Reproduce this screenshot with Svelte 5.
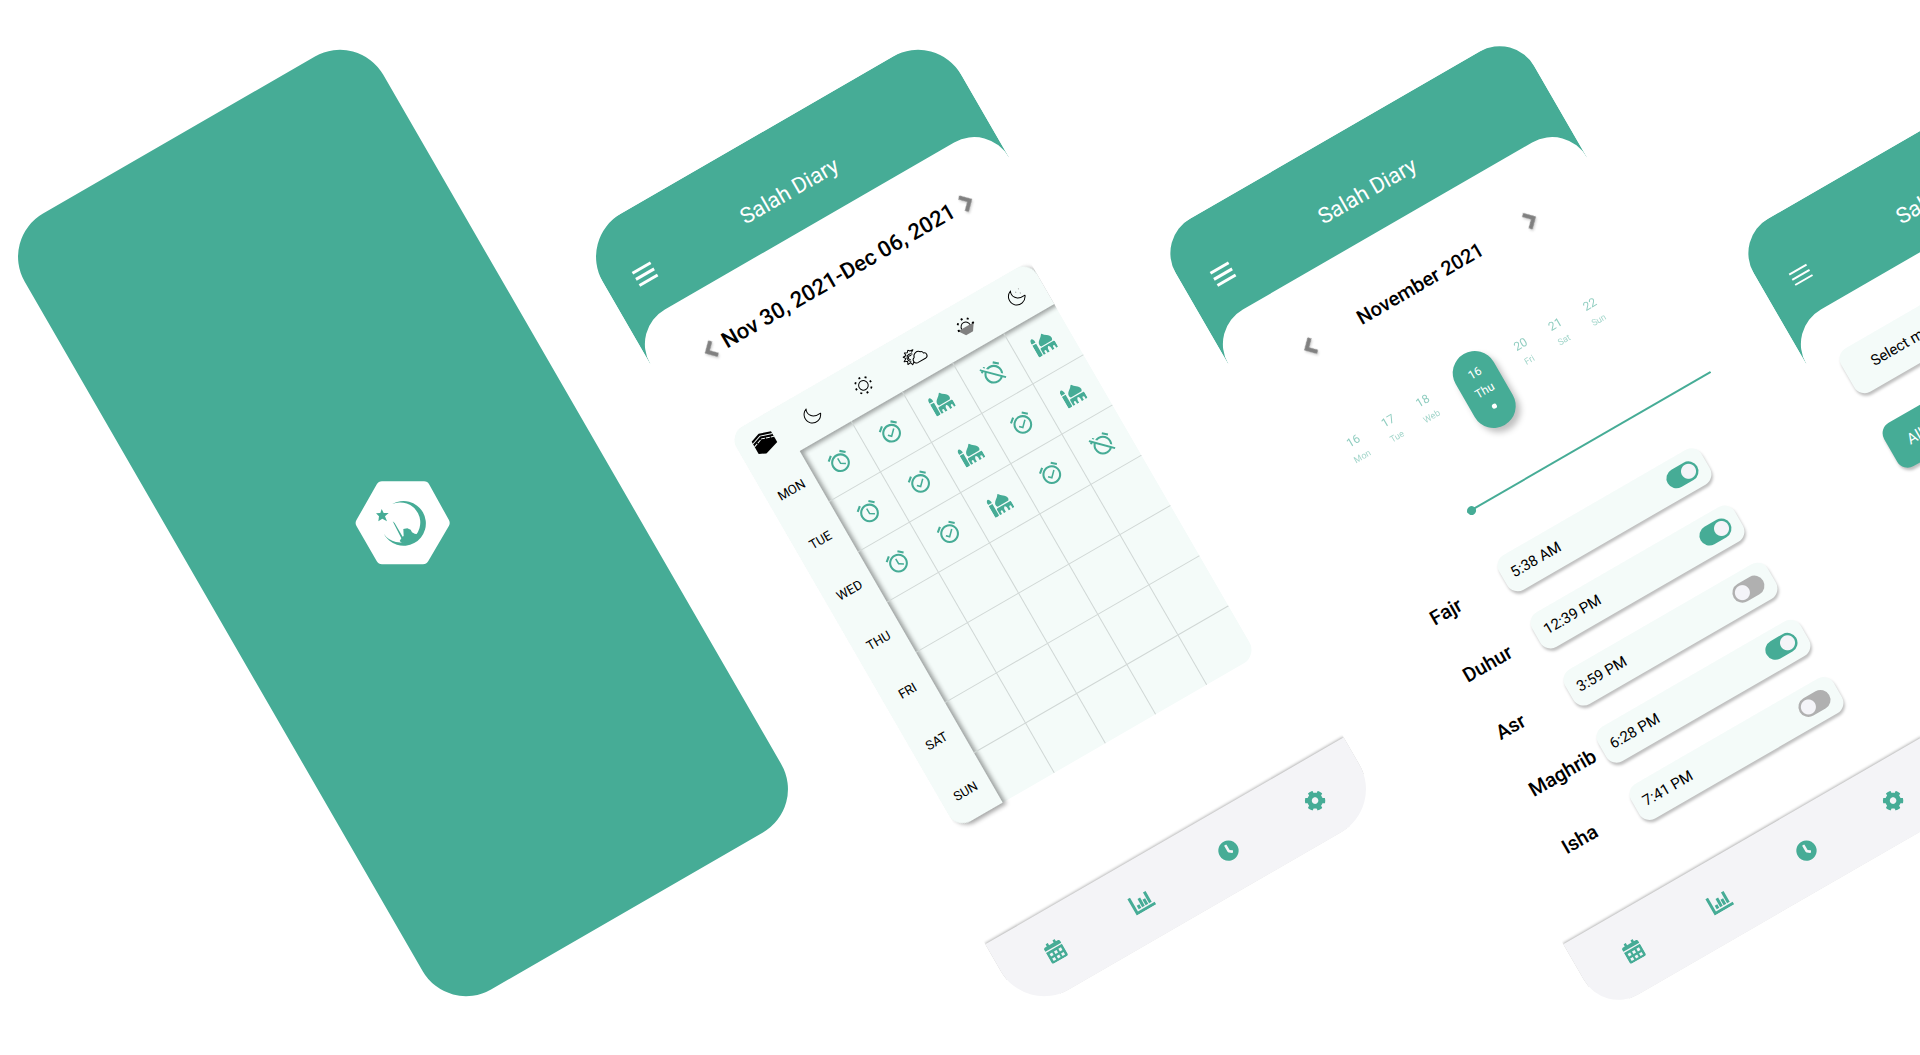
<script>
  const prayers = ['Tahajjud', 'Fajr', 'Dhuhr', 'Asr', 'Maghrib', 'Isha'];

  const week = [
    { day: 'MON', marks: ['alarm', 'done', 'mosque', 'off', 'mosque'] },
    { day: 'TUE', marks: ['alarm', 'done', 'mosque', 'done', 'mosque'] },
    { day: 'WED', marks: ['alarm', 'done', 'mosque', 'done', 'off'] },
    { day: 'THU', marks: ['', '', '', '', ''] },
    { day: 'FRI', marks: ['', '', '', '', ''] },
    { day: 'SAT', marks: ['', '', '', '', ''] },
    { day: 'SUN', marks: ['', '', '', '', ''] }
  ];

  const days = [
    { num: 16, name: 'Mon' },
    { num: 17, name: 'Tue' },
    { num: 18, name: 'Web' },
    { num: 16, name: 'Thu', active: true },
    { num: 20, name: 'Fri' },
    { num: 21, name: 'Sat' },
    { num: 22, name: 'Sun' }
  ];

  let times = $state([
    { name: 'Fajr', time: '5:38 AM', on: true },
    { name: 'Duhur', time: '12:39 PM', on: true },
    { name: 'Asr', time: '3:59 PM', on: false },
    { name: 'Maghrib', time: '6:28 PM', on: true },
    { name: 'Isha', time: '7:41 PM', on: false }
  ]);

  let progress = $state(0);
</script>

{#snippet mark(kind)}
  {#if kind === 'mosque'}
    <svg class="mosque" viewBox="0 0 640 512" preserveAspectRatio="none" aria-label="Prayed in mosque">
      <path d="M0 480c0 17.67 14.33 32 32 32h64c17.67 0 32-14.33 32-32V160H0v320zm579.16-192c17.86-17.39 28.84-37.34 28.84-58.91 0-52.86-41.79-93.79-87.92-122.9-41.94-26.47-80.63-57.77-111.96-96.22L400 0l-8.12 9.97c-31.33 38.45-70.01 69.76-111.96 96.22C233.79 135.3 192 176.23 192 229.09c0 21.57 10.98 41.52 28.84 58.91h358.32zM608 320H192c-17.67 0-32 14.33-32 32v128c0 17.67 14.33 32 32 32h32v-64c0-17.67 14.33-32 32-32s32 14.33 32 32v64h64v-72c0-48 48-72 48-72s48 24 48 72v72h64v-64c0-17.67 14.33-32 32-32s32 14.33 32 32v64h32c17.67 0 32-14.33 32-32V352c0-17.67-14.33-32-32-32zM64 0S0 32 0 96v32h128V96c0-64-64-96-64-96z" />
    </svg>
  {:else if kind === 'off'}
    <svg class="clock" viewBox="0 0 24 24" aria-label="Missed">
      <path d="M12 6c3.87 0 7 3.13 7 7 0 .84-.16 1.65-.43 2.4l1.52 1.52c.58-1.19.91-2.51.91-3.92 0-4.97-4.03-9-9-9-1.41 0-2.73.33-3.92.91L9.6 6.43C10.35 6.16 11.16 6 12 6zm10-.28l-4.6-3.86-1.29 1.53 4.6 3.86L22 5.72zM2.92 2.29L1.65 3.57 2.98 4.9l-1.11.93 1.42 1.42 1.11-.94.8.8C3.83 8.69 3 10.75 3 13c0 4.97 4.02 9 9 9 2.25 0 4.31-.83 5.89-2.2l2.2 2.2 1.27-1.27L3.89 3.27l-.97-.98zm13.55 16.1C15.26 19.39 13.7 20 12 20c-3.87 0-7-3.13-7-7 0-1.7.61-3.26 1.61-4.47l9.86 9.86zM8.02 3.28L6.6 1.86l-.86.71 1.42 1.42.86-.71z" />
    </svg>
  {:else if kind}
    <svg class="clock" viewBox="0 0 24 24" aria-label={kind === 'done' ? 'On time' : 'Reminder'}>
      <path d="M22 5.72l-4.6-3.86-1.29 1.53 4.6 3.86L22 5.72zM7.88 3.39L6.6 1.86 2 5.71l1.29 1.53 4.59-3.85zM12 4c-4.97 0-9 4.03-9 9s4.02 9 9 9c4.97 0 9-4.03 9-9s-4.03-9-9-9zm0 16c-3.87 0-7-3.13-7-7s3.13-7 7-7 7 3.13 7 7-3.13 7-7 7z" />
      {#if kind === 'done'}
        <path d="M10.54 14.53L8.41 12.4l-1.06 1.06 3.18 3.18 6-6-1.06-1.06-4.93 4.95z" />
      {:else}
        <path d="M12.5 8H11v6l4.75 2.85.75-1.23-4-2.37V8z" />
      {/if}
    </svg>
  {/if}
{/snippet}

{#snippet prayerIcon(index)}
  {#if index === 0}
    <svg class="kaaba" viewBox="0 0 24 22">
      <path d="M1 4L11 .5 23 4.500V17L8 21.500 1 18z" />
      <path class="band" d="M1 6.600L11 3.200 23 7.200" />
      <path class="band dashed" d="M1 9.800L11 6.400 23 10.400" />
    </svg>
  {:else if index === 1}
    <svg class="line" viewBox="0 0 20 20">
      <path d="M7.500 1.800C5 6.500 8 13.800 18 12.700 15.500 18.600 8.500 19.800 4.300 15.800 0 11.500 1.500 4.300 7.500 1.800z" />
    </svg>
  {:else if index === 2}
    <svg class="line" viewBox="0 0 20 20">
      <circle cx="10" cy="10" r="4.800" />
      <path class="ray" d="M10 1v1.800M10 17.200V19M1 10h1.800M17.200 10H19M3.600 3.600l1.200 1.200M15.200 15.200l1.200 1.200M3.600 16.400l1.200-1.200M15.200 4.800l1.200-1.200" />
    </svg>
  {:else if index === 3}
    <svg class="line wide" viewBox="0 0 26 18">
      <path d="M12 4.500l2.600-1.600-3.200-.4L10 .8 8.300 2.700 5.600 1.400l.2 3L2.500 4.600l1.700 2.500L1 9l3.200 1.300-1.200 3 3.200-.5.8 3 2.400-1.800" />
      <path d="M12 6.500A3.700 3.700 0 1 0 7.600 12M10.200 7.300a2 2 0 1 0-2.400 3" />
      <path d="M12.500 16.500a3.200 3.200 0 0 1-.6-6.300A4.600 4.600 0 0 1 20 8.300a3 3 0 0 1 2.200 2.700 2.800 2.800 0 0 1-.4 5.500z" />
    </svg>
  {:else if index === 4}
    <svg class="line" viewBox="0 0 20 20">
      <path class="dusk" d="M1 10.500h18l-5 7.500H6z" />
      <path d="M5.200 10.500a4.800 4.800 0 0 1 9.600 0" />
      <path class="ray" d="M10 1v2M3.700 3.700l1.300 1.300M16.300 3.700L15 5M.8 10.500h2M17.200 10.500h2" />
    </svg>
  {:else}
    <svg class="line" viewBox="0 0 20 20">
      <path d="M7.500 1.800C5 6.500 8 13.800 18 12.700 15.500 18.600 8.500 19.800 4.300 15.800 0 11.500 1.500 4.300 7.500 1.800z" />
      <path class="stars" d="M11 5.500h1M15 4h1M14.500 8.500h1" />
    </svg>
  {/if}
{/snippet}

{#snippet chevron(dir)}
  <svg class="chevron" viewBox="0 0 14 20" aria-hidden="true">
    <path d={dir === 'left' ? 'M11.500 2L3.500 10l8 8' : 'M2.500 2L10.500 10l-8 8'} />
  </svg>
{/snippet}

{#snippet header()}
  <header>
    <button class="menu" aria-label="Menu"><span></span><span></span><span></span></button>
    <h1>Salah Diary</h1>
  </header>
{/snippet}

{#snippet nav()}
  <nav>
    <button aria-label="Calendar">
      <svg class="cal" viewBox="0 0 448 512"><path fill-rule="evenodd" d="M0 464c0 26.500 21.500 48 48 48h352c26.500 0 48-21.500 48-48V192H0zM64 256h72v72H64zM188 256h72v72h-72zM312 256h72v72h-72zM64 384h72v72H64zM188 384h72v72h-72zM312 384h72v72h-72zM400 64h-48V16c0-8.800-7.200-16-16-16h-32c-8.800 0-16 7.200-16 16v48H160V16c0-8.800-7.200-16-16-16h-32c-8.800 0-16 7.200-16 16v48H48C21.500 64 0 85.500 0 112v48h448v-48c0-26.500-21.500-48-48-48z" /></svg>
    </button>
    <button aria-label="Statistics">
      <svg class="chart" viewBox="0 0 24 20"><path d="M2.200 1v17.300H23M7 15.300v-4M11 15.300V6M15 15.300V9M19 15.300V3" /></svg>
    </button>
    <button aria-label="Times">
      <svg viewBox="0 0 512 512"><path d="M256 8C119 8 8 119 8 256s111 248 248 248 248-111 248-248S393 8 256 8zm92.490 313l-20 25a16 16 0 0 1-22.490 2.500l-67-49.720a40 40 0 0 1-15-31.230V112a16 16 0 0 1 16-16h32a16 16 0 0 1 16 16v144l58 42.500a16 16 0 0 1 2.490 22.500z" /></svg>
    </button>
    <button aria-label="Settings">
      <svg viewBox="0 0 512 512"><path d="M487.400 315.700l-42.600-24.600c4.300-23.200 4.300-47 0-70.200l42.600-24.600c4.900-2.800 7.100-8.600 5.500-14-11.100-35.600-30-67.800-54.700-94.600-3.800-4.100-10-5.100-14.800-2.300L380.800 110c-17.900-15.400-38.500-27.300-60.800-35.100V25.800c0-5.600-3.900-10.500-9.400-11.700-36.700-8.200-74.300-7.800-109.200 0-5.500 1.200-9.400 6.100-9.400 11.700V75c-22.200 7.900-42.800 19.800-60.800 35.100L88.700 85.500c-4.900-2.800-11-1.900-14.800 2.300-24.700 26.700-43.600 58.900-54.700 94.600-1.700 5.400.6 11.200 5.500 14L67.300 221c-4.300 23.200-4.300 47 0 70.200l-42.600 24.600c-4.900 2.800-7.100 8.600-5.500 14 11.100 35.600 30 67.800 54.700 94.600 3.800 4.100 10 5.100 14.800 2.300l42.600-24.600c17.900 15.400 38.500 27.300 60.800 35.100v49.200c0 5.600 3.900 10.500 9.400 11.700 36.700 8.200 74.300 7.800 109.200 0 5.500-1.200 9.400-6.100 9.400-11.700v-49.200c22.200-7.900 42.800-19.800 60.800-35.100l42.600 24.600c4.900 2.800 11 1.900 14.800-2.300 24.700-26.700 43.600-58.900 54.700-94.600 1.500-5.500-.7-11.300-5.600-14.100zM256 336c-44.100 0-80-35.900-80-80s35.900-80 80-80 80 35.900 80 80-35.900 80-80 80z" /></svg>
    </button>
  </nav>
{/snippet}

<div class="stage">
  <section class="phone splash">
    <svg class="logo" viewBox="-5 10 390 360" aria-label="Salah Diary logo">
      <path class="hex" d="M66 190L127 83H253L312 190 250 296H127z" />
      <path d="M157 134A67 67 0 1 1 132 222 60 60 0 1 0 157 134z" />
      <path d="M159 185l6 5 24 41 3-2-1-21 12-2 10 4 4 8 8 4 8 2-6 12-18 12-22 2-7-6 5-8z" />
      <path d="M126 148l6 12 15 0-11 10 6 15-14-8-12 8 2-15-9-9 13-1z" />
    </svg>
  </section>

  <section class="phone diary">
    {@render header()}
    <main>
      <div class="period">
        <button aria-label="Previous week">{@render chevron('left')}</button>
        <h2>Nov 30, 2021-Dec 06, 2021</h2>
        <button aria-label="Next week">{@render chevron('right')}</button>
      </div>
      <div class="board">
        <div class="frame" aria-hidden="true"><div></div></div>
        <table>
          <thead>
            <tr>
              {#each prayers as name, i}
                <th scope="col" aria-label={name}>{@render prayerIcon(i)}</th>
              {/each}
            </tr>
          </thead>
          <tbody>
            {#each week as row}
              <tr>
                <th scope="row">{row.day}</th>
                {#each row.marks as kind}
                  <td>{@render mark(kind)}</td>
                {/each}
              </tr>
            {/each}
          </tbody>
        </table>
      </div>
    </main>
    {@render nav()}
  </section>

  <section class="phone schedule">
    {@render header()}
    <main>
      <div class="period month">
        <button aria-label="Previous month">{@render chevron('left')}</button>
        <h2>November 2021</h2>
        <button aria-label="Next month">{@render chevron('right')}</button>
      </div>
      <div class="days">
        {#each days as d}
          <button class="day" class:active={d.active}>
            <span class="num">{d.num}</span>
            <span class="name">{d.name}</span>
            {#if d.active}<i></i>{/if}
          </button>
        {/each}
      </div>
      <input class="slider" type="range" min="0" max="100" bind:value={progress} aria-label="Day progress" />
      <ul>
        {#each times as t}
          <li>
            <h3>{t.name}</h3>
            <label class="time">
              <span>{t.time}</span>
              <input type="checkbox" bind:checked={t.on} />
            </label>
          </li>
        {/each}
      </ul>
    </main>
    {@render nav()}
  </section>

  <section class="phone filter">
    {@render header()}
    <main>
      <select aria-label="Select month">
        <option>Select month</option>
      </select>
      <button class="all">All</button>
    </main>
    {@render nav()}
  </section>
</div>

<style>
  :global(body) {
    margin: 0;
    background: #fff;
  }

  .stage,
  .stage * {
    box-sizing: border-box;
  }

  .stage {
    display: flex;
    align-items: flex-start;
    gap: 164px;
    min-height: 100vh;
    padding: 75px 196px 0;
    overflow: hidden;
    font-family: Roboto, "Liberation Sans", sans-serif;
    color: #000;
  }

  button,
  select {
    padding: 0;
    border: 0;
    background: none;
    font: inherit;
    color: inherit;
    cursor: pointer;
  }

  h1,
  h2,
  h3,
  ul {
    margin: 0;
    padding: 0;
  }

  svg {
    display: block;
  }

  .phone {
    flex: none;
    display: flex;
    flex-direction: column;
    width: 414px;
    height: 896px;
    border-radius: 40px;
    overflow: hidden;
    background: #fff;
    transform: rotate(-30deg);
  }

  .splash,
  .diary {
    border-radius: 50px;
  }

  .splash {
    align-items: center;
    justify-content: center;
    background: #46ac96;
  }

  .logo {
    width: 130px;
    height: 120px;
    fill: #46ac96;
    transform: rotate(30deg);
  }

  .logo .hex {
    fill: #fff;
    stroke: #fff;
    stroke-width: 36;
    stroke-linejoin: round;
  }

  header {
    display: grid;
    grid-template-columns: 1fr auto 1fr;
    align-items: center;
    height: 145px;
    padding: 0 30px 16px;
    background: #46ac96;
    color: #fff;
  }

  .menu {
    display: flex;
    flex-direction: column;
    justify-content: space-between;
    width: 21px;
    height: 17px;
  }

  .filter .menu {
    width: 20px;
    height: 14px;
  }

  .menu span {
    height: 3px;
    background: #fff;
  }

  .filter .menu span {
    height: 2px;
  }

  h1 {
    font-size: 22px;
    line-height: 28px;
    font-weight: 400;
  }

  main {
    flex: 1;
    margin-top: -40px;
    border-radius: 40px 40px 0 0;
    background: #fff;
  }

  .period {
    display: flex;
    align-items: center;
    justify-content: space-between;
    padding: 44px 52px 0;
  }

  .month {
    padding: 52px 73px 0 72px;
  }

  h2 {
    font-size: 22px;
    line-height: 28px;
    font-weight: 500;
    white-space: nowrap;
  }

  .month h2 {
    font-size: 20px;
  }

  .chevron {
    width: 14px;
    height: 20px;
    fill: none;
    stroke: #808080;
    stroke-width: 4;
    filter: drop-shadow(0 2px 1px rgba(0, 0, 0, 0.16));
  }

  .board {
    position: relative;
    margin: 68px 34px 0 33px;
    border-radius: 16px;
    background: #f4fbf9;
    clip-path: inset(0 0 -10px 0);
  }

  .frame {
    position: absolute;
    inset: 0;
    filter: drop-shadow(3px 3px 2px rgba(0, 0, 0, 0.35));
  }

  .frame div {
    height: 100%;
    border-radius: 16px 16px 0 16px;
    background: #f4fbf9;
    clip-path: polygon(0 0, 100% 0, 100% 50px, 53px 50px, 53px 100%, 0 100%);
  }

  table {
    position: relative;
    width: 100%;
    table-layout: fixed;
    border-collapse: separate;
    border-spacing: 0;
  }

  th,
  td {
    height: 58px;
    padding: 0;
    font-size: 13px;
    font-weight: 400;
    text-align: center;
    vertical-align: middle;
  }

  thead th {
    height: 50px;
  }

  th:first-child {
    width: 53px;
  }

  td + td {
    border-left: 1px solid #d0d7d5;
  }

  tbody tr + tr td {
    border-top: 1px solid #d0d7d5;
  }

  th svg,
  td svg {
    margin: 0 auto;
    width: 20px;
    height: 20px;
  }

  td svg {
    fill: #46ac96;
  }

  td .clock {
    width: 25px;
    height: 25px;
  }

  td .mosque {
    width: 22px;
    height: 20px;
  }

  th .kaaba {
    width: 24px;
    height: 22px;
  }

  .band {
    fill: none;
    stroke: #f4fbf9;
    stroke-width: 1;
  }

  .dashed {
    stroke-dasharray: 4 1;
  }

  .line {
    fill: none;
    stroke: #000;
    stroke-width: 1;
    stroke-linejoin: round;
  }

  th .wide {
    width: 26px;
    height: 18px;
  }

  .ray {
    stroke-width: 2;
  }

  .dusk {
    fill: #808080;
    stroke: none;
  }

  .stars {
    stroke: #999;
  }

  nav {
    display: flex;
    align-items: center;
    justify-content: space-between;
    height: 81px;
    padding: 0 45px;
    background: #f4f4f7;
    box-shadow: 0 -1px 3px rgba(0, 0, 0, 0.3);
  }

  nav button {
    display: flex;
    justify-content: center;
    width: 24px;
  }

  nav svg {
    width: 21px;
    height: 21px;
    fill: #46ac96;
  }

  nav .cal {
    width: 19px;
  }

  nav .chart {
    width: 24px;
    height: 20px;
    fill: none;
    stroke: #46ac96;
    stroke-width: 3;
  }

  .days {
    display: flex;
    height: 82px;
    margin: 69px 0 0 50px;
  }

  .day {
    display: flex;
    flex-direction: column;
    align-items: center;
    gap: 2px;
    width: 40px;
    padding-top: 12px;
    line-height: 16px;
    color: #46ac96;
  }

  .num {
    font-size: 12px;
    opacity: 0.6;
  }

  .name {
    font-size: 9px;
    opacity: 0.5;
  }

  .active {
    gap: 4px;
    width: 44px;
    margin: 0 12px 0 17px;
    padding-top: 14px;
    border-radius: 22px;
    background: #46ac96;
    box-shadow: 2px 6px 6px rgba(0, 0, 0, 0.25);
    color: #fff;
  }

  .active .num,
  .active .name {
    font-size: 12px;
    opacity: 1;
  }

  .active i {
    width: 5px;
    height: 5px;
    margin-top: 4px;
    border-radius: 50%;
    background: #fff;
  }

  .slider {
    display: block;
    width: 281px;
    height: 10px;
    margin: 52px 0 0 133px;
    appearance: none;
    background: linear-gradient(#46ac96, #46ac96) center / 100% 2px no-repeat;
  }

  .slider::-webkit-slider-thumb {
    appearance: none;
    width: 9px;
    height: 9px;
    border-radius: 50%;
    background: #46ac96;
  }

  ul {
    display: flex;
    flex-direction: column;
    gap: 26px;
    margin: 50px 49px 0 48px;
    list-style: none;
  }

  li {
    display: flex;
    align-items: center;
  }

  h3 {
    width: 83px;
    font-size: 20px;
    line-height: 24px;
    font-weight: 500;
  }

  .time {
    flex: 1;
    display: flex;
    align-items: center;
    justify-content: space-between;
    height: 40px;
    padding: 0 10px;
    border-radius: 12px;
    background: #f4fbf9;
    box-shadow: 0 3px 3px rgba(0, 0, 0, 0.25);
    font-size: 15px;
  }

  .time input {
    width: 34px;
    height: 20px;
    margin: 0;
    border-radius: 10px;
    appearance: none;
    background: radial-gradient(circle at 10px 10px, #f4f4f8 7px, #b0b0b0 8px);
  }

  .time input:checked {
    background: radial-gradient(circle at 24px 10px, #f4f4f8 7px, #46ac96 8px);
  }

  .filter main {
    display: flex;
    flex-direction: column;
    align-items: flex-start;
    gap: 36px;
    padding: 46px 30px 0;
  }

  select {
    width: 100%;
    height: 50px;
    padding-left: 28px;
    border-radius: 12px;
    appearance: none;
    background: #f4fbf9;
    box-shadow: 0 3px 3px rgba(0, 0, 0, 0.25);
    font-size: 15px;
  }

  .all {
    width: 100px;
    height: 50px;
    padding-left: 20px;
    border-radius: 12px;
    background: #46ac96;
    box-shadow: 0 3px 3px rgba(0, 0, 0, 0.25);
    font-size: 15px;
    color: #fff;
    text-align: left;
  }
</style>
